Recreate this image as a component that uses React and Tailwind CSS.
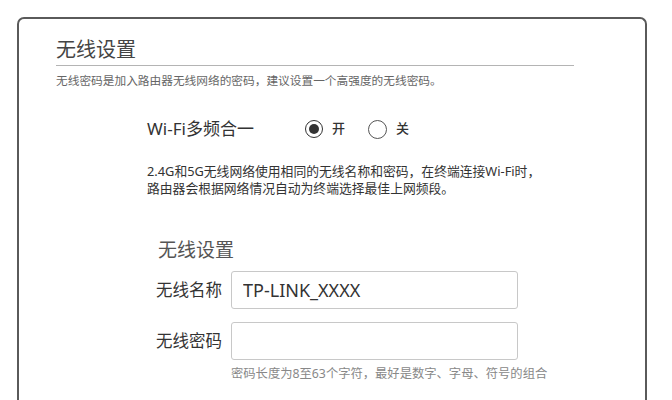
export default function App() {
  const font = { fontFamily: '"Noto Sans", "Noto Sans CJK SC", sans-serif' }
  return (
    <div className="h-[400px] w-[672px] overflow-hidden bg-white" style={font}>
      <div className="ml-[17px] mt-[17px] h-[420px] w-[630px] rounded-t-[7px] border-2 border-b-0 border-[#5a5a5a] bg-white pl-[37px] pt-[19px]">
        <h1 className="w-[518px] border-b border-[#b4b4b4] pb-[3px] text-[20px] leading-[24px] text-[#444]">无线设置</h1>
        <p className="mt-[6px] text-[11.7px] leading-[16px] text-[#666]">
          无线密码是加入路由器无线网络的密码，建议设置一个高强度的无线密码。
        </p>

        <div className="ml-[91px] mt-[29px] flex items-center">
          <span className="w-[158px] text-[17px] leading-[24px] text-[#333]">Wi-Fi多频合一</span>
          <label className="flex items-center">
            <span className="flex h-[18px] w-[18px] items-center justify-center rounded-full border-[1.5px] border-[#333]">
              <span className="h-[10px] w-[10px] rounded-full bg-[#333]" />
            </span>
            <span className="ml-[9px] text-[13px] font-medium text-[#333]">开</span>
          </label>
          <label className="ml-[23px] flex items-center">
            <span className="h-[19px] w-[19px] rounded-full border-[1.5px] border-[#555]" />
            <span className="ml-[9px] text-[13px] font-medium text-[#333]">关</span>
          </label>
        </div>

        <p className="ml-[91px] mt-[22px] text-[12.8px] leading-[17px] text-[#333]">
          2.4G和5G无线网络使用相同的无线名称和密码，在终端连接Wi-Fi时，
          <br />
          路由器会根据网络情况自动为终端选择最佳上网频段。
        </p>

        <h2 className="ml-[102px] mt-[41px] text-[19px] leading-[24px] text-[#555]">无线设置</h2>

        <div className="ml-[100px] mt-[9px] flex items-center">
          <span className="w-[75px] text-[16.5px] text-[#333]">无线名称</span>
          <input
            readOnly
            value="TP-LINK_XXXX"
            className="h-[38px] w-[287px] rounded-[3px] border border-[#c8c8c8] px-[11px] text-[18px] text-[#333] outline-none"
            style={font}
          />
        </div>
        <div className="ml-[100px] mt-[13px] flex items-center">
          <span className="w-[75px] text-[16.5px] text-[#333]">无线密码</span>
          <input
            readOnly
            type="password"
            className="h-[38px] w-[287px] rounded-[3px] border border-[#c8c8c8] px-[11px] text-[18px] text-[#333] outline-none"
          />
        </div>
        <p className="ml-[175px] mt-[6px] text-[12.3px] leading-[16px] text-[#888]">
          密码长度为8至63个字符，最好是数字、字母、符号的组合
        </p>
      </div>
    </div>
  )
}
